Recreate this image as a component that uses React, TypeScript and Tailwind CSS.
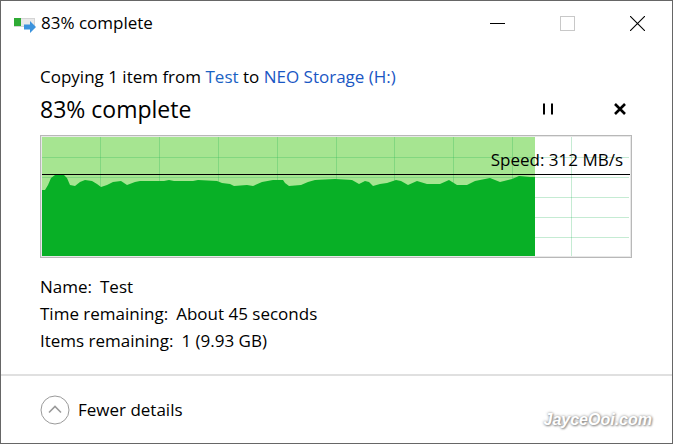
interface Detail {
  label: string;
  value: string;
}

const details: Detail[] = [
  { label: "Name:", value: "Test" },
  { label: "Time remaining:", value: "About 45 seconds" },
  { label: "Items remaining:", value: "1 (9.93 GB)" },
];

const gridColumns = [58, 117, 176, 235, 294, 352, 411, 470, 529];
const gridRows = [20, 40, 60, 80, 100];

// Transfer speed over time, as x,y samples in the chart's own units
const speedPoints =
  "0,53 3,53 6,48 9,41 13,38 22,38 25,41 28,48 33,49 38,45 43,43 50,44 55,47 59,50 65,48 71,45 79,44 85,48 93,45 98,44 122,44 127,43 132,44 151,44 156,43 175,44 180,46 188,47 192,49 205,48 211,49 220,45 231,43 241,43 243,46 247,49 259,48 266,45 273,43 293,42 310,43 317,47 323,44 327,45 331,49 338,47 345,46 354,43 359,44 366,48 375,44 385,47 398,47 407,43 415,48 425,48 433,44 448,41 458,45 470,42 477,39 488,40 493,40";

function CopyIcon() {
  return (
    <svg width="24" height="24" viewBox="0 0 24 24" aria-hidden="true">
      <rect x="1.5" y="7.5" width="20" height="8" fill="#e9e9e9" stroke="#d4d4d4" />
      <rect x="1" y="7" width="7" height="8" fill="#2fab35" />
      <path d="M11 13.500h6V10l6 6-6 6v-3.500h-6z" fill="#3c93dd" />
    </svg>
  );
}

function TitleBar() {
  return (
    <header className="flex h-11 items-center">
      <div className="flex flex-1 items-center gap-1 pl-3">
        <CopyIcon />
        <span>83% complete</span>
      </div>
      <button aria-label="Minimize" className="flex h-full w-[70px] items-center justify-center">
        <svg width="15" height="15" viewBox="0 0 15 15" stroke="#000">
          <path d="M0 7.500h15" />
        </svg>
      </button>
      <button aria-label="Maximize" disabled className="flex h-full w-[70px] items-center justify-center">
        <svg width="15" height="15" viewBox="0 0 15 15" fill="none" stroke="#c8c8c8">
          <rect x="0.5" y="0.5" width="14" height="14" />
        </svg>
      </button>
      <button aria-label="Close" className="flex h-full w-[70px] items-center justify-center">
        <svg width="15" height="15" viewBox="0 0 15 15" stroke="#000" strokeWidth="1.100">
          <path d="M0 0l15 15M15 0L0 15" />
        </svg>
      </button>
    </header>
  );
}

function SpeedChart() {
  return (
    <div className="relative mt-[10px] border border-[#b8b8b8] bg-[#e8e8e8] p-px">
      <svg
        className="block h-[119px] w-full"
        viewBox="0 0 588 119"
        preserveAspectRatio="none"
        aria-hidden="true"
      >
        <rect width="588" height="119" fill="#fff" />
        <rect width="493" height="119" fill="#a6e591" />
        <g stroke="#16b050" strokeOpacity="0.250">
          {gridColumns.map((x) => (
            <path key={x} d={`M${x + 0.5} 0V119`} />
          ))}
          {gridRows.map((y) => (
            <path key={y} d={`M0 ${y + 0.5}H587`} />
          ))}
        </g>
        <polygon points={`0,119 ${speedPoints} 493,119`} fill="#08b026" />
        <path d="M0 37.500H588" stroke="#000" />
      </svg>
      <span className="absolute top-3 right-2">Speed: 312 MB/s</span>
    </div>
  );
}

export default function App() {
  return (
    <div className="flex min-h-screen flex-col border border-[#666] bg-white font-['Open_Sans',sans-serif] text-[17px] leading-6 text-black">
      <TitleBar />
      <main className="px-10 pt-5 pl-[39px]">
        <p>
          Copying 1 item from{" "}
          <a href="#test" className="text-[#1a63c4]">
            Test
          </a>{" "}
          to{" "}
          <a href="#neo-storage" className="text-[#1a57c4]">
            NEO Storage (H:)
          </a>
        </p>
        <div className="flex items-center justify-between pt-1">
          <h1 className="text-[23px] leading-8">83% complete</h1>
          <div className="flex gap-12">
            <button aria-label="Pause" className="flex size-6 items-center justify-center">
              <svg width="10" height="12" viewBox="0 0 10 12">
                <path d="M0 0.500h2v11H0zM8 0.500h2v11H8z" />
              </svg>
            </button>
            <button aria-label="Cancel" className="flex size-6 items-center justify-center">
              <svg width="12" height="12" viewBox="0 0 12 12" stroke="#000" strokeWidth="2.600">
                <path d="M1 1l10 10M11 1L1 11" />
              </svg>
            </button>
          </div>
        </div>
        <SpeedChart />
        <dl className="pt-[15px] pb-5">
          {details.map((detail) => (
            <div key={detail.label} className="flex gap-2 leading-[27px]">
              <dt>{detail.label}</dt>
              <dd>{detail.value}</dd>
            </div>
          ))}
        </dl>
      </main>
      <footer className="flex flex-1 items-center justify-between border-t-2 border-[#e0e0e0] pr-5 pl-[39px]">
        <button className="flex items-center gap-2">
          <svg width="30" height="30" viewBox="0 0 30 30" fill="none" stroke="#9a9a9a">
            <circle cx="15" cy="15" r="14" />
            <path d="M9 17.500l6-6 6 6" strokeWidth="1.600" />
          </svg>
          <span>Fewer details</span>
        </button>
        <span className="pt-5 font-['Liberation_Sans',sans-serif] text-[16px] font-bold text-white italic [text-shadow:0_0_3px_#888,1px_1px_2px_#999]">
          JayceOoi.com
        </span>
      </footer>
    </div>
  );
}
